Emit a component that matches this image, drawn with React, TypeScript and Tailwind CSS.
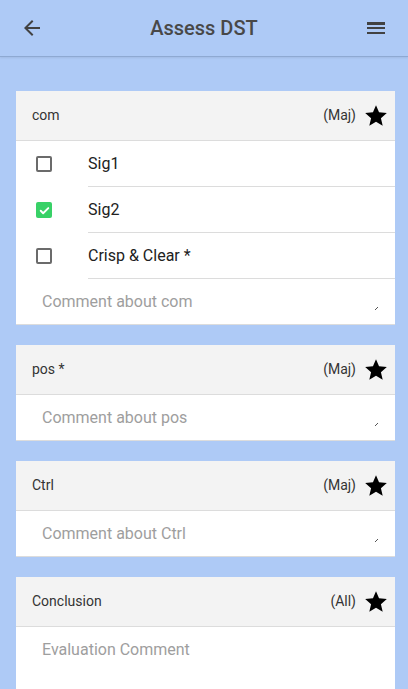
import React from 'react';

type Section = {
  title: string;
  tag: string;
  items?: { label: string; checked: boolean }[];
  placeholder: string;
  tall?: boolean;
};

const sections: Section[] = [
  {
    title: 'com',
    tag: '(Maj)',
    items: [
      { label: 'Sig1', checked: false },
      { label: 'Sig2', checked: true },
      { label: 'Crisp & Clear *', checked: false },
    ],
    placeholder: 'Comment about com',
  },
  { title: 'pos *', tag: '(Maj)', placeholder: 'Comment about pos' },
  { title: 'Ctrl', tag: '(Maj)', placeholder: 'Comment about Ctrl' },
  { title: 'Conclusion', tag: '(All)', placeholder: 'Evaluation Comment', tall: true },
];

function Star() {
  return (
    <svg viewBox="0 0 24 24" className="w-[26px] h-[26px] shrink-0" fill="#000">
      <path d="M12 17.27L18.18 21l-1.64-7.03L22 9.24l-7.19-.61L12 2 9.19 8.63 2 9.24l5.46 4.73L5.82 21z" />
    </svg>
  );
}

function Checkbox({ checked }: { checked: boolean }) {
  if (checked) {
    return (
      <div className="w-4 h-4 rounded-[2px] bg-[#38d167] flex items-center justify-center">
        <svg viewBox="0 0 24 24" className="w-[13px] h-[13px]" fill="none" stroke="#fff" strokeWidth="3.5" strokeLinecap="round" strokeLinejoin="round">
          <path d="M5 12.5l4.5 4.5L19 7.5" />
        </svg>
      </div>
    );
  }
  return <div className="w-4 h-4 rounded-[2px] border-2 border-[#6b6b6b]" />;
}

function Card({ s }: { s: Section }) {
  return (
    <div className="bg-white ml-4 mr-[13px] border-b border-[#dcdcdc]">
      <div className="h-[50px] bg-[#f3f3f3] border-b border-[#dcdcdc] flex items-center pl-4 pr-[6px]">
        <span className="flex-1 text-[14px] text-[#333]">{s.title}</span>
        <span className="text-[14px] text-[#333] mr-[7px]">{s.tag}</span>
        <Star />
      </div>
      {s.items?.map((it) => (
        <div key={it.label} className="flex h-[46px]">
          <div className="w-[72px] pl-5 flex items-center">
            <Checkbox checked={it.checked} />
          </div>
          <div className="flex-1 border-b border-[#dcdcdc] flex items-center text-[16px] text-[#212121]">
            {it.label}
          </div>
        </div>
      ))}
      <div className="relative">
        <textarea
          placeholder={s.placeholder}
          className={`block w-full resize-none outline-none pl-[26px] pt-[11px] text-[16px] text-[#222] placeholder:text-[#9e9e9e] ${s.tall ? 'h-[120px]' : 'h-[45px]'}`}
        />
        {!s.tall && (
          <svg className="absolute right-[17px] bottom-[14px] w-[3px] h-[3px]" viewBox="0 0 3 3">
            <path d="M0 3L3 0" stroke="#555" strokeWidth="1" />
          </svg>
        )}
      </div>
    </div>
  );
}

export default function App() {
  return (
    <div className="min-h-screen bg-[#aecaf6] font-['Roboto',sans-serif] overflow-hidden h-[689px]">
      {/* Toolbar */}
      <div className="h-14 flex items-center px-5 shadow-[0_1px_0_#8ea9d2,0_2px_2px_rgba(0,0,0,0.08)] relative z-10">
        <svg viewBox="0 0 24 24" className="w-6 h-6" fill="#424242">
          <path d="M20 11H7.83l5.59-5.59L12 4l-8 8 8 8 1.41-1.41L7.83 13H20v-2z" />
        </svg>
        <h1 className="flex-1 text-center text-[20px] font-medium text-[#484848]">Assess DST</h1>
        <svg viewBox="0 0 24 24" className="w-6 h-6" fill="#424242">
          <path d="M3 18h18v-2H3v2zm0-5h18v-2H3v2zm0-6v2h18V6H3z" />
        </svg>
      </div>

      <div className="pt-[35px] flex flex-col gap-5">
        {sections.map((s) => (
          <Card key={s.title} s={s} />
        ))}
      </div>
    </div>
  );
}
